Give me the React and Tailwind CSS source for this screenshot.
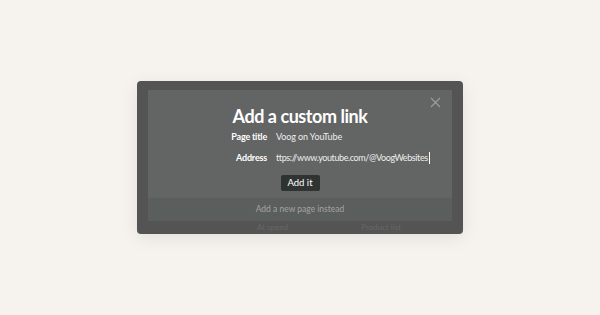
import React from 'react'

export default function App() {
  return (
    <div className="min-h-[315px] w-[600px] bg-[#f6f3ef] flex justify-center pt-[81px]" style={{ fontFamily: 'Lato, "Open Sans", sans-serif' }}>
      <div className="w-[326px] h-[153px] rounded-[4px] bg-[#545454] shadow-[0_4px_18px_rgba(0,0,0,0.08)] flex flex-col items-center pt-[9px]">
        <div className="relative w-[304px] h-[131px] bg-[#636464] flex flex-col">
          <button className="absolute right-[11px] top-[7px] text-[#9c9c9c]">
            <svg width="11" height="11" viewBox="0 0 11 11" fill="none" stroke="currentColor" strokeWidth="1.2">
              <path d="M1 1L10 10M10 1L1 10" />
            </svg>
          </button>
          <h1 className="text-center text-white font-bold text-[18px] tracking-[-0.45px] leading-[24px] mt-[14px]">Add a custom link</h1>
          <div className="grid grid-cols-[119px_1fr] gap-x-[9px] gap-y-[7px] text-[9px] leading-[14px] mt-[2px]">
            <div className="text-right text-white font-bold tracking-[-0.2px]">Page title</div>
            <div className="text-[#eeeeee] tracking-[-0.1px]">Voog on YouTube</div>
            <div className="text-right text-white font-bold tracking-[-0.2px]">Address</div>
            <div className="text-[#eeeeee] tracking-[-0.4px] flex items-center">
              ttps://www.youtube.com/@VoogWebsites
              <span className="inline-block w-px h-[12px] bg-white ml-px" />
            </div>
          </div>
          <div className="flex justify-center mt-[10px]">
            <button className="h-[16px] w-[39px] bg-[#2f3332] text-white text-[9.5px] leading-[16px] rounded-[2px]">Add it</button>
          </div>
          <div className="mt-auto h-[23px] bg-[#5a5e5d] text-[#a3a3a3] text-[8.5px] flex items-center justify-center">
            Add a new page instead
          </div>
        </div>
        <div className="w-[304px] flex text-[8px] text-[#676767] leading-[13px]">
          <span className="ml-[109px]">At speed</span>
          <span className="ml-[73px]">Product list</span>
        </div>
      </div>
    </div>
  )
}
